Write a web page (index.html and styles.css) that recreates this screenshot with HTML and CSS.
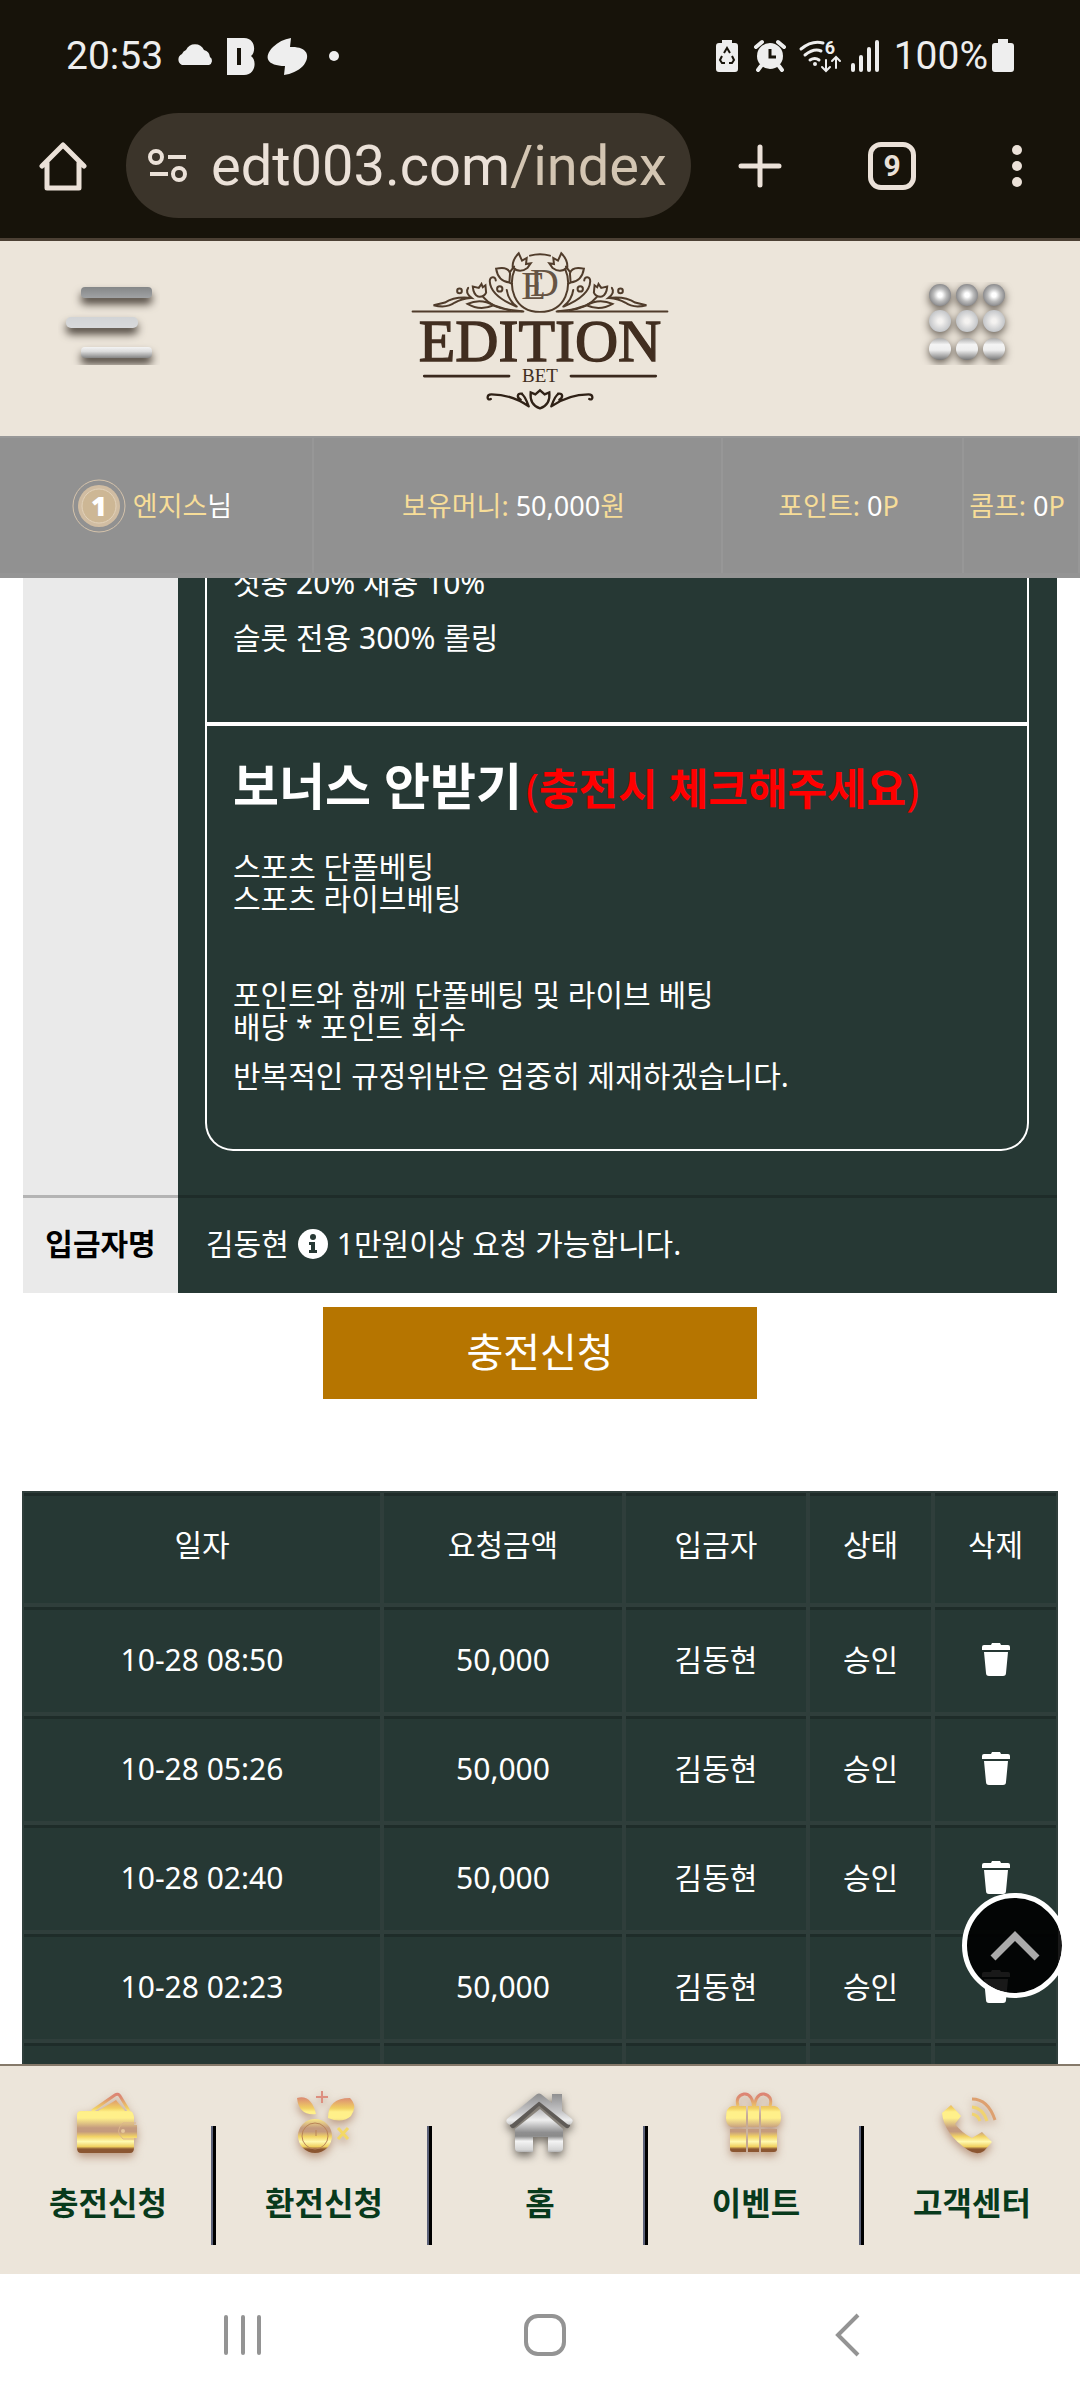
FILE: index.html
```html
<!DOCTYPE html>
<html lang="ko">
<head>
  <meta charset="UTF-8">
  <meta name="viewport" content="width=device-width, initial-scale=1.0">
  <title>EDITION BET</title>
  <link rel="stylesheet" href="styles.css">
</head>
<body>
  <!-- 상태바 -->
  <div class="status-bar">
    <span class="clock">20:53</span>
    <svg class="status-left" width="164" height="40" viewBox="0 0 164 40" fill="#eee">
      <path d="M7 29a6 6 0 0 1 0-11a8 8 0 0 1 4-4a10 10 0 0 1 18 0a8 8 0 0 1 6 7a4.500 4.500 0 0 1-1 8z"/>
      <path fill-rule="evenodd" d="M52 2h17c12 0 12 15 7 18c6 4 5 19-7 19h-17zM62 12v17h4V12z"/>
      <path d="M116 2l-1 9c16-1 22 8 13 19c-5 5-12 8-19 9l1-9c-18 0-22-9-12-19c5-5 11-8 18-9z"/>
      <circle cx="159" cy="20" r="5"/>
    </svg>
    <svg class="status-right" width="164" height="40" viewBox="0 0 164 40" fill="#eee">
      <path d="M6 4h10v3h3q3 0 3 3v23q0 3-3 3h-16q-3 0-3-3v-23q0-3 3-3h3z"/>
      <path d="M8 17l3-5l3 5M16 20l2 4l-2 3h-3M9 27h-3l-2-3l2-4" fill="none" stroke="#17130a" stroke-width="2"/>
      <circle cx="54" cy="20" r="13"/>
      <path d="M40 11l6-5M68 11l-6-5M45 30l-3 4M63 30l3 4" stroke="#eee" stroke-width="4" stroke-linecap="round"/>
      <path d="M54 13v8h6" fill="none" stroke="#17130a" stroke-width="3"/>
      <g fill="none" stroke="#eee" stroke-width="3" stroke-linecap="round">
        <path d="M85 13q11-9 22-6M89 19q9-7 16-4M94 24q5-3 9 0"/>
        <path d="M110 24v10M106 31l4 4l4-4M120 32V22M116 25l4-4l4 4" stroke-width="2"/>
      </g>
      <text x="114" y="18" class="wifi-num">6</text>
      <circle cx="99" cy="28" r="2"/>
      <path d="M137 29v5M145 21v13M153 13v21M161 6v28" stroke="#eee" stroke-width="4" stroke-linecap="round"/>
    </svg>
    <span class="battery-text">100%</span>
    <svg class="battery" width="22" height="34" viewBox="0 0 22 34" fill="#eee">
      <path d="M6 0h10v4h3q3 0 3 3v23q0 3-3 3h-16q-3 0-3-3v-23q0-3 3-3h3z"/>
    </svg>
  </div>

  <!-- 브라우저 주소창 -->
  <div class="toolbar">
    <button class="tool home" aria-label="홈페이지">
      <svg width="48" height="50" viewBox="0 0 48 50" fill="none" stroke="#ebe1d8" stroke-width="5" stroke-linecap="round" stroke-linejoin="round">
        <path d="M3 25L24 4L45 25M8 22v25h32V22"/>
      </svg>
    </button>
    <button class="address">
      <svg width="40" height="34" viewBox="0 0 40 34" fill="none" stroke="#ebe1d8" stroke-width="4">
        <circle cx="8" cy="8" r="6"/><path d="M20 8h18M2 25h18"/><circle cx="31" cy="25" r="6"/>
      </svg>
      <span class="url">edt003.com<span class="path">/index</span></span>
    </button>
    <button class="tool plus" aria-label="새 탭">
      <svg width="44" height="44" viewBox="0 0 44 44" stroke="#ebe1d8" stroke-width="5" stroke-linecap="round">
        <path d="M22 3v38M3 22h38"/>
      </svg>
    </button>
    <button class="tool tabs">9</button>
    <button class="tool more" aria-label="더보기">
      <svg width="12" height="44" viewBox="0 0 12 44" fill="#ebe1d8">
        <circle cx="6" cy="6" r="5"/><circle cx="6" cy="22" r="5"/><circle cx="6" cy="38" r="5"/>
      </svg>
    </button>
  </div>

  <!-- 헤더 -->
  <header class="header">
    <button class="icon-btn" aria-label="메뉴">
      <svg width="102" height="83" viewBox="0 0 102 83">
        <defs>
          <linearGradient id="bar1" x2="0" y2="1"><stop stop-color="#858788"/><stop offset="1" stop-color="#a0a2a4"/></linearGradient>
          <linearGradient id="bar2" x2="0" y2="1"><stop stop-color="#d2d4d6"/><stop offset="1" stop-color="#d8d9db"/></linearGradient>
          <linearGradient id="bar3" x2="0" y2="1"><stop stop-color="#f4f4f4"/><stop offset=".4" stop-color="#dcdcdc"/><stop offset="1" stop-color="#858585"/></linearGradient>
        </defs>
        <g class="bar-shadow">
          <rect x="23" y="5" width="71" height="11" rx="4" fill="url(#bar1)"/>
          <rect x="8" y="35" width="72" height="11" rx="5" fill="url(#bar2)"/>
          <rect x="23" y="65" width="71" height="11" rx="4" fill="url(#bar3)"/>
        </g>
      </svg>
    </button>
    <a class="logo" href="#" aria-label="EDITION BET">
      <svg width="260" height="163" viewBox="90 30 780 490" fill="none" stroke="#503c2b" stroke-width="6" stroke-linecap="round">
        <path d="M97 215H430M530 215H863" />
        <path d="M132 409H387M573 409H828" stroke="#3a291d" stroke-width="8"/>
        <path d="M450 47q30-9 60 0M404 88c-22 48-4 128 76 128s98-80 76-128"/>
        <g id="flowers">
          <path d="M416 40q-20 20-18 42q20 20 44 2l10-14l-14 2l2-18l-14 8z"/>
          <path d="M348 86q36-8 42 14l-2 28q-34-4-40-42zM390 96l12-16M388 128l8 4"/>
          <path d="M347 122c0-14-18-14-18 2q2 44 80 76M380 150q4 30 30 50"/>
          <circle cx="359" cy="147" r="8"/>
          <path d="M304 132l-8 12l-18-4q2 24 16 30q18 2 24-12l-2-22l-8 6zM308 170q30 36 84 40l34 4"/>
          <path d="M262 192q40-18 78 4q-40 18-78-4zM340 196l50 16"/>
          <circle cx="238" cy="153" r="7"/>
          <path d="M264 144q-10 14 10 30q-50-6-80 14l-34 8q40 10 64-8q20-12 48-14"/>
        </g>
        <use href="#flowers" transform="matrix(-1 0 0 1 960 0)"/>
        <g stroke="#2f2116" stroke-width="7">
          <g id="curl">
            <path d="M332 478c-12 6-14-14 2-14q60 0 112 36M422 480c-12-6-12-20 4-18M424 462q10 4 22 38"/>
          </g>
          <use href="#curl" transform="matrix(-1 0 0 1 960 0)"/>
          <path d="M452 458q-4 38 28 48q32-10 28-48l-14 6l-14-12l-14 12z"/>
        </g>
        <g class="logo-text">
          <text x="424" y="178" class="mono">E</text>
          <text x="450" y="168" class="mono">D</text>
          <text x="480" y="365" class="name">EDITION</text>
          <text x="480" y="428" class="sub">BET</text>
        </g>
      </svg>
    </a>
    <button class="icon-btn" aria-label="전체 메뉴">
      <svg width="102" height="83" viewBox="0 0 102 83">
        <defs>
          <radialGradient id="ball1"><stop offset=".2" stop-color="#fff"/><stop offset=".6" stop-color="#bbb"/><stop offset="1" stop-color="#8b8b8d"/></radialGradient>
          <radialGradient id="ball2"><stop offset=".2" stop-color="#f4f2f0"/><stop offset="1" stop-color="#c3c5c8"/></radialGradient>
          <linearGradient id="ball3" x2="0" y2="1"><stop stop-color="#aaa"/><stop offset=".3" stop-color="#f4f4f4"/><stop offset=".55" stop-color="#eee"/><stop offset="1" stop-color="#777"/></linearGradient>
        </defs>
        <g class="ball-shadow">
          <g fill="url(#ball1)"><circle cx="20" cy="13" r="11"/><circle cx="47" cy="13" r="11"/><circle cx="74" cy="13" r="11"/></g>
          <g fill="url(#ball2)"><circle cx="20" cy="39" r="11"/><circle cx="47" cy="39" r="11"/><circle cx="74" cy="39" r="11"/></g>
          <g fill="url(#ball3)"><circle cx="20" cy="67" r="11"/><circle cx="47" cy="67" r="11"/><circle cx="74" cy="67" r="11"/></g>
        </g>
      </svg>
    </button>
  </header>

  <ul class="user-info">
    <li>
      <svg width="54" height="54" viewBox="0 0 54 54">
        <circle cx="27" cy="27" r="26" fill="none" stroke="#d5c3ab" stroke-width="1"/>
        <circle cx="27" cy="27" r="21" fill="#d1bda2"/>
        <circle cx="27" cy="27" r="17" fill="#cdb795" stroke="#e2d2ba" stroke-width="1"/>
        <text x="27" y="37" class="badge-num">1</text>
      </svg>
      <span class="label">엔지스<b>님</b></span>
    </li>
    <li><span class="label">보유머니: <b>50,000</b>원</span></li>
    <li><span class="label">포인트: <b>0</b>P</span></li>
    <li><span class="label">콤프: <b>0</b>P</span></li>
  </ul>

  <!-- 본문 -->
  <main class="content">
    <table class="deposit">
      <tr>
        <th></th>
        <td class="bonus-cell">
          <div class="bonus">
            <section>
              <p>첫충 20% 재충 10%</p>
              <p>슬롯 전용 300% 롤링</p>
            </section>
            <section>
              <h2>보너스 안받기<span><i>(</i>충전시 체크해주세요<i>)</i></span></h2>
              <p>스포츠 단폴베팅<br>스포츠 라이브베팅<br><br><br>포인트와 함께 단폴베팅 및 라이브 베팅<br>배당 * 포인트 회수</p>
              <p>반복적인 규정위반은 엄중히 제재하겠습니다.</p>
            </section>
          </div>
        </td>
      </tr>
      <tr>
        <th>입금자명</th>
        <td>
          <div class="depositor">
            <span>김동현</span>
            <svg width="32" height="32" viewBox="0 0 32 32">
              <circle cx="16" cy="16" r="15" fill="#fff"/>
              <circle cx="16" cy="9" r="3" fill="#263834"/>
              <path d="M12 14h6v8h2v3h-8v-3h2v-5h-2z" fill="#263834"/>
            </svg>
            <span>1만원이상 요청 가능합니다.</span>
          </div>
        </td>
      </tr>
    </table>

    <button class="submit">충전신청</button>

    <table class="history">
      <thead>
        <tr><th class="date">일자</th><th class="amount">요청금액</th><th class="name">입금자</th><th class="state">상태</th><th>삭제</th></tr>
      </thead>
      <tbody>
        <tr><td>10-28 08:50</td><td>50,000</td><td>김동현</td><td>승인</td><td><button class="trash" aria-label="삭제"><svg width="28" height="34" viewBox="0 0 28 34"><path id="trash" d="M0 4q0-2 2-2h7l1-2h8l1 2h7q2 0 2 2v3H0zM2 9h24l-2 21q0 3-3 3H7q-3 0-3-3z" fill="#fff"/></svg></button></td></tr>
        <tr><td>10-28 05:26</td><td>50,000</td><td>김동현</td><td>승인</td><td><button class="trash" aria-label="삭제"><svg width="28" height="34" viewBox="0 0 28 34"><use href="#trash"/></svg></button></td></tr>
        <tr><td>10-28 02:40</td><td>50,000</td><td>김동현</td><td>승인</td><td><button class="trash" aria-label="삭제"><svg width="28" height="34" viewBox="0 0 28 34"><use href="#trash"/></svg></button></td></tr>
        <tr><td>10-28 02:23</td><td>50,000</td><td>김동현</td><td>승인</td><td><button class="trash" aria-label="삭제"><svg width="28" height="34" viewBox="0 0 28 34"><use href="#trash"/></svg></button></td></tr>
        <tr><td></td><td></td><td></td><td></td><td></td></tr>
      </tbody>
    </table>

    <button class="to-top" aria-label="맨 위로">
      <svg width="50" height="32" viewBox="0 0 50 32" fill="none" stroke="#aaa" stroke-width="7">
        <path d="M3 28L25 6L47 28"/>
      </svg>
    </button>
  </main>

  <!-- 하단 메뉴 -->
  <nav class="bottom-nav">
    <a href="#">
      <svg class="gold" width="72" height="80" viewBox="0 0 72 80">
        <defs>
          <linearGradient id="gold" gradientUnits="userSpaceOnUse" x1="0" y1="6" x2="0" y2="68">
            <stop stop-color="#dd7f74"/><stop offset=".1" stop-color="#dc8f72"/><stop offset=".26" stop-color="#f0cf62"/>
            <stop offset=".32" stop-color="#fff08a"/><stop offset=".42" stop-color="#fff08a"/><stop offset=".58" stop-color="#c49b7e"/>
            <stop offset=".64" stop-color="#c49b7e"/><stop offset=".72" stop-color="#f3d466"/><stop offset=".8" stop-color="#fffab0"/>
            <stop offset=".88" stop-color="#f0d060"/><stop offset=".92" stop-color="#8b5631"/><stop offset="1" stop-color="#8b5631"/>
          </linearGradient>
        </defs>
        <path d="M20 25L43 9q3-2 5 1l9 15" fill="none" stroke="url(#gold)" stroke-width="3"/>
        <path d="M26 25L44 14l9 11z" fill="url(#gold)"/>
        <path d="M9 25h49q3 0 4 6v8h3v13h-3v10q0 5-4 5H9q-4 0-4-5V29q0-4 4-4z" fill="url(#gold)"/>
        <path d="M64 37H51q-9 8 0 16h13" fill="none" stroke="#dbb58c" stroke-width="1"/>
        <circle cx="51" cy="45" r="2" fill="#e6c79c"/>
      </svg>
      충전신청
    </a>
    <a href="#">
      <svg class="gold" width="72" height="80" viewBox="0 0 72 80" fill="url(#gold)">
        <path d="M9 12q14-4 19 16q-17 2-19-16zM40 32q0-20 22-20q8 8 1 18q-9 8-23 2z"/>
        <path d="M34 5v12M28 11h12" stroke="#dd8f80" stroke-width="2"/>
        <circle cx="27" cy="50" r="17"/>
        <circle cx="27" cy="50" r="13" fill="none" stroke="#b98456" stroke-width="1"/>
        <path d="M28 44v6" stroke="#b98456" stroke-width="1"/>
        <path d="M50 42l10 11M60 42l-10 11" stroke="#f3d866" stroke-width="3"/>
      </svg>
      환전신청
    </a>
    <a href="#">
      <svg class="silver" width="72" height="80" viewBox="0 0 72 80">
        <defs>
          <linearGradient id="silver" gradientUnits="userSpaceOnUse" x1="0" y1="8" x2="0" y2="70">
            <stop stop-color="#8f8f90"/><stop offset=".3" stop-color="#c9c9cb"/><stop offset=".42" stop-color="#eee"/>
            <stop offset=".62" stop-color="#8f8f90"/><stop offset=".68" stop-color="#8a8a8a"/><stop offset=".76" stop-color="#f4f4f4"/>
            <stop offset=".9" stop-color="#d4d4d4"/><stop offset="1" stop-color="#777"/>
          </linearGradient>
        </defs>
        <path d="M36 23L59 43V62q0 4-4 4H44V51H29v15H15q-4 0-4-4V43z" fill="url(#silver)"/>
        <path d="M9 39L35 16L63 39" fill="none" stroke="#5f5b57" stroke-width="6" stroke-linejoin="round" stroke-linecap="round"/>
        <path d="M48 18V8h10v20z" fill="url(#silver)"/>
        <path d="M6 35L35 11L65 35" fill="none" stroke="url(#silver)" stroke-width="7" stroke-linejoin="round" stroke-linecap="round"/>
      </svg>
      홈
    </a>
    <a href="#">
      <svg class="gold" width="72" height="80" viewBox="0 0 72 80" fill="url(#gold)">
        <path d="M34 22q-2-15-10-14q-9 2-6 12M34 22q2-15 10-14q9 2 6 12" fill="none" stroke="url(#gold)" stroke-width="3"/>
        <path d="M12 20h14v21H11q-5-2-5-9q0-11 6-12zM28 20h11v21H28zM41 20h14q6 1 6 12q0 7-5 9H41z"/>
        <path d="M10 43h16v23H13q-3 0-3-3zM28 43h11v23H28zM41 43h16v20q0 3-3 3H41z"/>
      </svg>
      이벤트
    </a>
    <a href="#">
      <svg class="gold" width="72" height="80" viewBox="0 0 72 80">
        <path d="M6 27l9-8l10 11l-6 8q7 9 17 14l10-6l10 10l-8 9q-7 5-16-1Q8 48 6 27z" fill="url(#gold)"/>
        <g fill="none" stroke-width="3"><path d="M36 13q16 0 23 21" stroke="#dda06f"/><path d="M36 21q11 1 15 14M36 28q6 1 8 7" stroke="#f0d370"/></g>
      </svg>
      고객센터
    </a>
  </nav>

  <!-- 안드로이드 내비게이션 -->
  <div class="system-nav">
    <button aria-label="최근 앱">
      <svg width="44" height="44" viewBox="0 0 44 44" stroke="#949494" stroke-width="4" stroke-linecap="round"><path d="M5 4v36M22 4v36M38 4v36"/></svg>
    </button>
    <button aria-label="홈">
      <svg width="44" height="44" viewBox="0 0 44 44" fill="none" stroke="#949494" stroke-width="4"><rect x="3" y="3" width="38" height="38" rx="12"/></svg>
    </button>
    <button aria-label="뒤로">
      <svg width="44" height="44" viewBox="0 0 44 44" fill="none" stroke="#949494" stroke-width="4"><path d="M33 2L13 22L33 42"/></svg>
    </button>
  </div>
</body>
</html>
```
FILE: styles.css
```css
* {
  box-sizing: border-box;
  margin: 0;
  padding: 0;
}
body {
  display: flex;
  flex-direction: column;
  height: 100vh;
  background-color: #fff;
  font-family: "Noto Sans", "Noto Sans CJK KR", sans-serif;
  font-size: 30px;
  line-height: 32px;
}
button {
  border: 0;
  background: none;
  font-family: inherit;
  color: inherit;
}
svg {
  display: block;
  flex: none;
}
a {
  text-decoration: none;
}

/* 상태바 */
.status-bar {
  display: flex;
  align-items: center;
  height: 113px;
  padding: 0 66px 2px;
  background-color: #17130a;
  color: #eee;
  font-family: Roboto, sans-serif;
  font-size: 39px;
}
.status-left {
  margin-left: 12px;
}
.status-right {
  margin-left: auto;
}
.wifi-num {
  font-size: 18px;
  font-weight: 700;
  text-anchor: middle;
}
.battery-text {
  margin: 0 4px 0 14px;
}

/* 주소창 */
.toolbar {
  display: flex;
  align-items: center;
  padding: 0 57px 20px 39px;
  background-color: #17130a;
  border-bottom: 3px solid #4c4034;
}
.address {
  display: flex;
  flex: 1;
  align-items: center;
  gap: 23px;
  min-width: 0;
  height: 105px;
  margin: 0 47px 0 39px;
  padding: 0 22px;
  border-radius: 53px;
  background-color: #3b342a;
  color: #ebe1d8;
  overflow: hidden;
}
.url {
  font-family: Roboto, sans-serif;
  font-size: 56px;
  line-height: 64px;
}
.path {
  color: #d3c5b2;
}
.tabs {
  width: 48px;
  height: 48px;
  margin: 0 95px 0 86px;
  border: 5px solid #ebe1d8;
  border-radius: 13px;
  color: #ebe1d8;
  font-family: Roboto, sans-serif;
  font-size: 30px;
  font-weight: 700;
}

/* 헤더 */
.header {
  display: flex;
  justify-content: space-between;
  padding: 9px 58px 23px;
  background-color: #ece5da;
}
.icon-btn {
  align-self: flex-start;
  margin-top: 32px;
}
.bar-shadow {
  filter: drop-shadow(0 6px 4px #4a423a);
}
.ball-shadow {
  filter: drop-shadow(0 3px 4px #5f574e);
}
.logo-text {
  stroke: none;
  fill: #412e20;
  font-family: "Liberation Serif", serif;
}
.logo-text .mono {
  fill: #665444;
  font-size: 120px;
}
.logo-text .name {
  stroke: #412e20;
  stroke-width: 4px;
  font-size: 180px;
  text-anchor: middle;
}
.logo-text .sub {
  font-size: 57px;
  text-anchor: middle;
}

/* 회원 정보 */
.user-info {
  display: grid;
  grid-template-columns: 314fr 409fr 241fr 116fr;
  height: 142px;
  list-style: none;
  background-color: #919191;
  border-top: 2px solid #989898;
  border-bottom: 5px solid #949494;
}
.user-info li {
  display: flex;
  justify-content: center;
  align-items: center;
  gap: 7px;
  padding-right: 8px;
  border-right: 2px solid #979797;
  color: #f7dd98;
  font-size: 27px;
  white-space: nowrap;
}
.user-info b {
  color: #fff;
  font-weight: 400;
}
.badge-num {
  fill: #fff;
  font-size: 27px;
  font-weight: 900;
  text-anchor: middle;
}

/* 본문 */
.content {
  position: relative;
  flex: 1;
  min-height: 0;
  overflow: hidden;
  color: #fff;
}
.deposit {
  width: calc(100% - 46px);
  /* 스크롤된 상태 */
  margin: -12px auto 0;
  border-collapse: collapse;
  background-color: #263834;
}
.deposit th {
  width: 155px;
  background-color: #eaeaea;
  color: #000;
}
.deposit tr + tr th {
  box-shadow: inset 0 3px #b4b4b4;
}
.deposit tr + tr td {
  height: 98px;
  padding: 0 28px;
  box-shadow: inset 0 3px #1e2c29;
}
.deposit .bonus-cell {
  padding: 0 28px 44px 27px;
}
.bonus {
  border: 2px solid #fff;
  border-top: 0;
  border-radius: 0 0 28px 28px;
}
.bonus section {
  padding: 30px 26px 57px;
}
.bonus section:first-child {
  padding: 1px 26px 68px;
  border-bottom: 4px solid #fff;
}
.bonus section:first-child p + p {
  margin-top: 23px;
}
.bonus h2 {
  margin-bottom: 32px;
  font-size: 50px;
  line-height: 60px;
}
.bonus h2 span {
  margin-left: 4px;
  color: #f00;
  font-size: 43px;
}
.bonus h2 i {
  font-style: normal;
  font-weight: 400;
}
.bonus p + p {
  margin-top: 17px;
}
.depositor {
  display: flex;
  align-items: center;
  gap: 8px;
}
.submit {
  display: block;
  width: 42%;
  max-width: 434px;
  height: 92px;
  margin: 14px auto 92px;
  padding-bottom: 6px;
  background-color: #b67500;
  color: #fff;
  font-size: 40px;
}

/* 신청 내역 */
.history {
  width: calc(100% - 44px);
  margin: 0 auto;
  table-layout: fixed;
  border-spacing: 0;
  background-color: #263834;
  text-align: center;
}
.history th,
.history td {
  height: 109px;
  border: 2px solid #2f3e3b;
  box-shadow: inset 0 3px #1e2c29;
  font-weight: 400;
}
.history th {
  height: 114px;
  padding-bottom: 6px;
}
.date {
  width: 360px;
}
.amount {
  width: 242px;
}
.history .name {
  width: 184px;
}
.state {
  width: 125px;
}
.trash {
  vertical-align: middle;
}
.to-top {
  display: flex;
  justify-content: center;
  align-items: center;
  position: absolute;
  right: 13px;
  bottom: 66px;
  width: 105px;
  height: 105px;
  border: 5px solid #fff;
  border-radius: 50%;
  background-color: rgba(0, 0, 0, 0.9);
  background-clip: padding-box;
}

/* 하단 메뉴 */
.bottom-nav {
  display: grid;
  grid-template-columns: repeat(5, 1fr);
  height: 210px;
  background-color: #ece5da;
  border-top: 2px solid #85796a;
}
.bottom-nav a {
  display: flex;
  flex-direction: column;
  align-items: center;
  gap: 17px;
  padding-top: 20px;
  /* 구분선 */
  background: linear-gradient(to right, #5b6178 2px, #000 2px) no-repeat right 60px / 5px 119px;
  color: #083a1c;
  font-size: 32px;
  font-weight: 700;
  line-height: 40px;
}
.bottom-nav a:last-child {
  background: none;
}
.gold {
  filter: drop-shadow(0 4px 4px rgba(139, 80, 45, 0.5));
}
.silver {
  filter: drop-shadow(0 4px 4px rgba(60, 55, 50, 0.7));
}

/* 시스템 내비게이션 */
.system-nav {
  display: flex;
  justify-content: space-around;
  align-items: center;
  height: 126px;
  padding: 0 82px 4px 92px;
}
```
